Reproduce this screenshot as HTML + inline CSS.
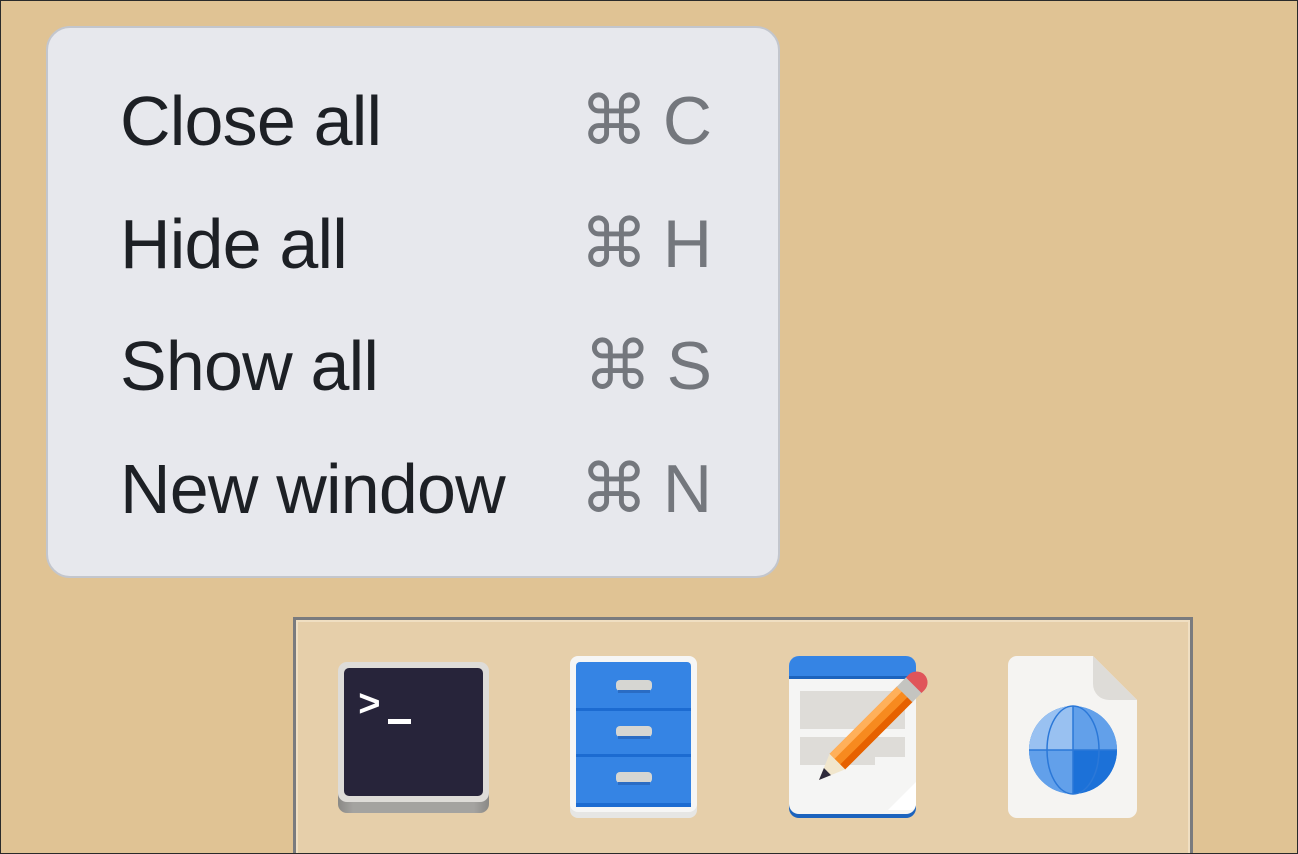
<!DOCTYPE html>
<html><head><meta charset="utf-8"><style>
html,body{margin:0;padding:0}
body{width:1298px;height:854px;position:relative;overflow:hidden;background:#e0c394;font-family:"Liberation Sans","DejaVu Sans",sans-serif;}
.frame{position:absolute;left:0;top:0;width:1296px;height:852px;border:1px solid #2a2a2a;z-index:5;pointer-events:none}
.menu{position:absolute;left:46px;top:26px;width:730px;height:548px;background:#e7e8ed;border:2px solid #c3c6cd;border-radius:24px;}
.item{position:absolute;left:72px;width:590px;font-size:70px;letter-spacing:-0.8px;color:#1d2025;line-height:1;height:80px}
.item span{position:absolute;right:0;top:1px;font-size:68px;color:#74777d;letter-spacing:-2px;}
.dock{position:absolute;left:293px;top:617px;height:237px;border:3px solid #7a7b7e;border-bottom:none;background:#e6cfaa;box-sizing:border-box;width:900px}
.dock .in{position:absolute;left:0;top:0;right:0;bottom:0;border:2px solid #f0dfc2;border-bottom:none}
</style></head><body>
<div class="frame"></div>
<div class="menu">
 <div class="item" style="top:58px">Close all<span>⌘ C</span></div>
 <div class="item" style="top:181px">Hide all<span>⌘ H</span></div>
 <div class="item" style="top:303px">Show all<span>⌘ S</span></div>
 <div class="item" style="top:426px">New window<span>⌘ N</span></div>
</div>
<div class="dock"><div class="in"></div></div>
<svg style="position:absolute;left:0;top:0" width="1298" height="854">
 <defs>
  <linearGradient id="tb" x1="0" y1="0" x2="1" y2="0"><stop offset="0" stop-color="#8a8986"/><stop offset=".1" stop-color="#a4a3a0"/><stop offset=".9" stop-color="#a4a3a0"/><stop offset="1" stop-color="#8a8986"/></linearGradient>
 </defs>
 <rect x="338" y="672" width="151" height="141" rx="9" fill="url(#tb)"/>
 <rect x="338" y="662" width="151" height="140" rx="9" fill="#dedcd8"/>
 <rect x="344" y="668" width="139" height="128" rx="5" fill="#27243a"/>
 <text x="358" y="716" fill="#fff" font-size="38" font-weight="bold" font-family="Liberation Mono,monospace">&gt;</text>
 <rect x="388" y="719" width="23" height="5" fill="#fff"/>
 <rect x="570" y="662" width="127" height="156" rx="8" fill="#e6e6e4"/>
 <rect x="570" y="656" width="127" height="156" rx="8" fill="#f6f6f5"/>
 <rect x="576" y="662" width="115" height="145" rx="4" fill="#3584e4"/>
 <rect x="576" y="708" width="115" height="3" fill="#1c6bd1"/>
 <rect x="576" y="754" width="115" height="3" fill="#1c6bd1"/>
 <rect x="576" y="803" width="115" height="4" fill="#1c6bd1"/>
 <g fill="#d6d6d2"><rect x="616" y="680" width="36" height="11" rx="4"/><rect x="616" y="726" width="36" height="11" rx="4"/><rect x="616" y="772" width="36" height="11" rx="4"/></g>
 <g fill="#2a6cc4"><rect x="618" y="690" width="32" height="3"/><rect x="618" y="736" width="32" height="3"/><rect x="618" y="782" width="32" height="3"/></g>
 <rect x="789" y="656" width="127" height="162" rx="10" fill="#1c63bd"/>
 <rect x="789" y="656" width="127" height="158" rx="10" fill="#f5f5f4"/>
 <path d="M799 656h107a10 10 0 0 1 10 10v12h-127v-12a10 10 0 0 1 10-10z" fill="#3584e4"/>
 <rect x="789" y="676" width="127" height="3" fill="#1c63bd"/>
 <rect x="800" y="691" width="105" height="38" fill="#dedcd8"/>
 <rect x="800" y="737" width="105" height="20" fill="#dedcd8"/>
 <rect x="800" y="757" width="75" height="8" fill="#dedcd8"/>
 <path d="M888 810l28-28v22a6 6 0 0 1-6 6z" fill="#fff"/>
 <g transform="rotate(45 872 727)">
  <rect x="861" y="680" width="22" height="96" fill="#f78a1f"/>
  <rect x="861" y="680" width="7" height="96" fill="#ffb05a"/>
  <rect x="876" y="680" width="7" height="96" fill="#e66100"/>
  <rect x="861" y="667" width="22" height="14" fill="#c4c4c0"/>
  <path d="M861 668v-4a11 11 0 0 1 22 0v4z" fill="#e0555a"/>
  <path d="M861 776h22l-11 26z" fill="#f1e6cc"/>
  <path d="M867 790h10l-5 12z" fill="#2e2a3a"/>
 </g>
 <path d="M1017 656h76l44 44v109a9 9 0 0 1-9 9h-111a9 9 0 0 1-9-9v-144a9 9 0 0 1 9-9z" fill="#f5f4f2"/>
 <path d="M1093 656v28a16 16 0 0 0 16 16h28z" fill="#dedcd8"/>
 <circle cx="1073" cy="750" r="44" fill="#3584e4"/>
 <path d="M1073 706a44 44 0 0 0 0 88z" fill="#62a0ea"/>
 <path d="M1073 706a44 44 0 0 0-44 44h44z" fill="#99c1f1"/>
 <path d="M1073 706a44 44 0 0 1 44 44h-44z" fill="#62a0ea"/>
 <path d="M1073 794a44 44 0 0 0 44-44h-44z" fill="#1c71d8"/>
 <path d="M1073 706v88M1029 750h88" stroke="#2b78d8" stroke-width="1.5"/>
 <ellipse cx="1073" cy="750" rx="26" ry="44" fill="none" stroke="#2b78d8" stroke-width="1.5"/>
</svg>
</body></html>
